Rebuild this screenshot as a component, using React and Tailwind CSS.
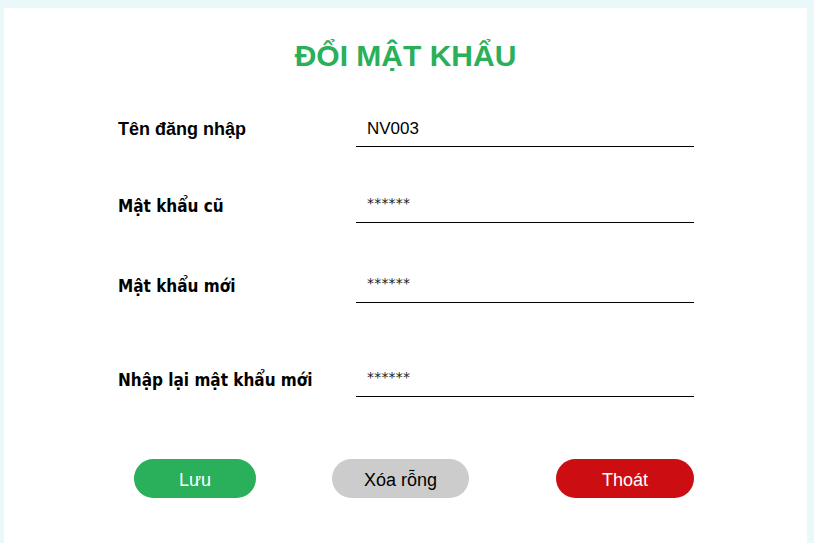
import React from "react";

const rows = [
  { label: "Tên đăng nhập", value: "NV003", mt: "mt-[41px]", arial: true },
  { label: "Mật khẩu cũ", value: "******", mt: "mt-[41px]" },
  { label: "Mật khẩu mới", value: "******", mt: "mt-[45px]" },
  { label: "Nhập lại mật khẩu mới", value: "******", mt: "mt-[59px]" },
];

const App = () => {
  return (
    <div className="min-h-[543px] bg-[#e9f8f8] pt-[8px] pl-[4px] pr-[7px]">
      <div className="bg-white min-h-[535px] pt-[33px]">
        <h1 className="text-center text-[30px] leading-none font-bold text-[#2aaf5b] font-['Liberation_Sans',Arial,sans-serif]">
          ĐỔI MẬT KHẨU
        </h1>

        <div className="pl-[114px]">
          {rows.map((row) => (
            <div key={row.label} className={`flex items-center ${row.mt}`}>
              <div
                className={
                  row.arial
                    ? "w-[238px] text-[18px] font-bold text-black font-['Liberation_Sans',Arial,sans-serif]"
                    : "w-[238px] text-[17px] font-bold text-black font-['DejaVu_Sans_Condensed','DejaVu_Sans',sans-serif] [font-stretch:condensed] mt-[2px]"
                }
              >
                {row.label}
              </div>
              <div className="w-[338px] h-[35px] border-b border-black flex items-center pl-[11px]">
                {row.value === "NV003" ? (
                  <span className="text-[17px] text-black font-['Liberation_Sans',Arial,sans-serif]">
                    {row.value}
                  </span>
                ) : (
                  <span className="text-[14px] text-[#222] font-['DejaVu_Sans',sans-serif] -mt-[4px] tracking-[0.2px]">
                    {row.value}
                  </span>
                )}
              </div>
            </div>
          ))}

          <div className="flex items-center mt-[62px] pl-[16px] font-['Liberation_Sans',Arial,sans-serif] text-[18px]">
            <button className="w-[122px] h-[39px] pt-[3px] rounded-full bg-[#2aaf5b] text-white">
              Lưu
            </button>
            <button className="ml-[76px] w-[137px] h-[39px] pt-[3px] rounded-full bg-[#cccccc] text-black">
              Xóa rỗng
            </button>
            <button className="ml-[87px] w-[138px] h-[39px] pt-[3px] rounded-full bg-[#cc0e12] text-white">
              Thoát
            </button>
          </div>
        </div>
      </div>
    </div>
  );
};

export default App;
